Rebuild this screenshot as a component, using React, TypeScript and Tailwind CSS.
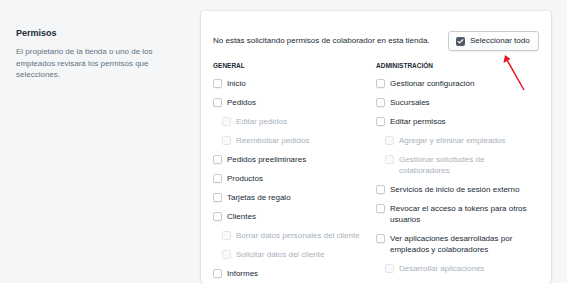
import { Check } from "lucide-react";

type Item = { label: string; sub?: boolean };

const general: Item[] = [
  { label: "Inicio" },
  { label: "Pedidos" },
  { label: "Editar pedidos", sub: true },
  { label: "Reembolsar pedidos", sub: true },
  { label: "Pedidos preeliminares" },
  { label: "Productos" },
  { label: "Tarjetas de regalo" },
  { label: "Clientes" },
  { label: "Borrar datos personales del cliente", sub: true },
  { label: "Solicitar datos del cliente", sub: true },
  { label: "Informes" },
];

const admin: Item[] = [
  { label: "Gestionar configuración" },
  { label: "Sucursales" },
  { label: "Editar permisos" },
  { label: "Agregar y eliminar empleados", sub: true },
  { label: "Gestionar solicitudes de colaboradores", sub: true },
  { label: "Servicios de inicio de sesión externo" },
  { label: "Revocar el acceso a tokens para otros usuarios" },
  { label: "Ver aplicaciones desarrolladas por empleados y colaboradores" },
  { label: "Desarrollar aplicaciones", sub: true },
];

function Row({ item }: { item: Item }) {
  return (
    <div className={`flex items-start gap-[5px] ${item.sub ? "pl-[9px]" : ""}`}>
      <span
        className={`mt-px h-[9px] w-[9px] shrink-0 rounded-[2px] border ${
          item.sub ? "border-[#e3e7eb] bg-[#f9fafb]" : "border-[#c4cdd5] bg-white shadow-[0_1px_0_rgba(22,29,37,0.05)]"
        }`}
      />
      <span className={`leading-[11px] ${item.sub ? "text-[#a9b2bb]" : "text-[#212b36]"}`}>{item.label}</span>
    </div>
  );
}

function Column({ title, items }: { title: string; items: Item[] }) {
  return (
    <div className="flex flex-col">
      <div className="text-[6.5px] font-semibold uppercase leading-[11px] text-[#212b36]">{title}</div>
      <div className="mt-[7px] flex flex-col gap-2 pr-3">
        {items.map((i) => (
          <Row key={i.label} item={i} />
        ))}
      </div>
    </div>
  );
}

export default function App() {
  return (
    <div
      className="relative flex h-[283px] w-[567px] overflow-hidden bg-[#f4f6f8] text-[8px]"
      style={{ fontFamily: '"Liberation Sans", Arial, sans-serif' }}
    >
      <div className="w-[201px] shrink-0 pl-4 pr-6 pt-[27px]">
        <h2 className="text-[9px] font-semibold leading-[12px] text-[#212b36]">Permisos</h2>
        <p className="mt-[7px] leading-[11.5px] text-[#637381]">
          El propietario de la tienda o uno de los empleados revisará los permisos que selecciones.
        </p>
      </div>

      <div className="mt-[11px] w-[350px] shrink-0 rounded-[3px] bg-white px-3 pt-[20px] shadow-[0_0_0_1px_rgba(63,63,68,0.05),0_1px_3px_0_rgba(63,63,68,0.15)]">
        <div className="flex h-5 items-center justify-between">
          <span className="text-[#212b36]">No estás solicitando permisos de colaborador en esta tienda.</span>
          <button className="flex h-5 w-[91px] items-center gap-[5px] whitespace-nowrap rounded-[3px] border border-[#c4cdd5] bg-gradient-to-b from-white to-[#f9fafb] px-[7px] text-[#212b36] shadow-[0_1px_0_rgba(22,29,37,0.05)]">
            <span className="flex h-[9px] w-[9px] shrink-0 items-center justify-center rounded-[2px] bg-[#505a66]">
              <Check className="h-[7px] w-[7px] text-white" strokeWidth={4} />
            </span>
            Seleccionar todo
          </button>
        </div>
        <div className="mt-[9px] grid grid-cols-2">
          <Column title="General" items={general} />
          <Column title="Administración" items={admin} />
        </div>
      </div>

      <svg className="pointer-events-none absolute left-0 top-0" width="567" height="283">
        <line x1="524" y1="90" x2="507" y2="60" stroke="#e8121a" strokeWidth="1.5" />
        <path d="M505 55 L503.5 63 L510.5 59 Z" fill="#e8121a" />
      </svg>
    </div>
  );
}
